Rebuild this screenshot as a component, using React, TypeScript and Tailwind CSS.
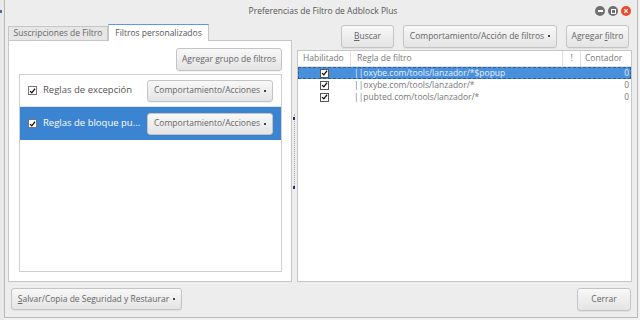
const rows = [
  { rule: '||oxybe.com/tools/lanzador/*$popup', selected: true },
  { rule: '||oxybe.com/tools/lanzador/*', selected: false },
  { rule: '||pubted.com/tools/lanzador/*', selected: false },
]

function Check({ dark = false }: { dark?: boolean }) {
  return (
    <span
      className={`inline-flex shrink-0 items-center justify-center w-[9px] h-[9px] border ${dark ? 'border-[#555]' : 'border-[#777]'} bg-white`}
    >
      <svg viewBox="0 0 10 10" className="w-[8px] h-[8px]">
        <path d="M1.5 5.2 L4 7.6 L8.6 1.8" fill="none" stroke="#111" strokeWidth="1.8" />
      </svg>
    </span>
  )
}

function Btn({ children, className = '' }: { children: React.ReactNode; className?: string }) {
  return (
    <div
      className={`flex items-center justify-center whitespace-nowrap rounded-[3px] border border-[#c4c4c4] bg-linear-to-b from-[#f8f8f8] to-[#e4e4e4] text-[#666] shadow-[0_1px_0_rgba(0,0,0,0.05)] ${className}`}
    >
      {children}
    </div>
  )
}

function Caret() {
  return <span className="ml-[4px] inline-block w-[2px] h-[2px] bg-[#444]" />
}

export default function App() {
  return (
    <div className="w-[640px] h-[320px] flex bg-[#f2f2f2] font-['Open_Sans',sans-serif] text-[#666] overflow-hidden">
      <div className="w-[4px] h-full bg-[#e9e9e9] relative">
        <span className="absolute left-0 top-[10px] w-[2px] h-[3px] bg-[#3a6fb0]" />
      </div>
      <div className="w-[634px] h-[318px] border-l border-r border-b border-[#b9b9b9] bg-[#ededed] flex flex-col">
        {/* title bar */}
        <div className="h-[23px] flex items-center relative">
          <div className="flex-1 text-center text-[8.5px] text-[#555] pl-[4px]">Preferencias de Filtro de Adblock Plus</div>
          <div className="absolute right-[6px] top-[6px] flex gap-[3px]">
            <span className="w-[10px] h-[10px] rounded-full bg-[#6f6f6f] flex items-center justify-center">
              <span className="w-[5px] h-[1.5px] bg-white" />
            </span>
            <span className="w-[10px] h-[10px] rounded-full bg-[#6f6f6f] flex items-center justify-center">
              <span className="w-[5px] h-[5px] border border-white" />
            </span>
            <span className="w-[10px] h-[10px] rounded-full bg-[#ec4a2c] flex items-center justify-center">
              <svg viewBox="0 0 10 10" className="w-[6px] h-[6px]">
                <path d="M2 2 L8 8 M8 2 L2 8" stroke="white" strokeWidth="1.8" />
              </svg>
            </span>
          </div>
        </div>

        <div className="flex h-[259px]">
          {/* left notebook */}
          <div className="ml-[3px] w-[284px] flex flex-col">
            <div className="h-[17px] flex items-end">
              <div className="h-[14px] w-[100px] border border-b-0 border-[#c6c6c6] bg-[#e6e6e6] text-[8.5px] flex items-center justify-center text-[#666]">
                Suscripciones de Filtro
              </div>
              <div className="h-[17px] w-[101px] border border-b-0 border-[#c6c6c6] border-t-[#5b9ae0] bg-white text-[8.5px] flex items-center justify-center text-[#555] -mb-px relative z-10">
                Filtros personalizados
              </div>
            </div>
            <div className="flex-1 bg-white border border-[#c6c6c6] flex flex-col pl-[10px] pr-[9px] pt-[7px] pb-[9px]">
              <div className="flex justify-end">
                <Btn className="w-[106px] h-[23px] text-[8.5px]">Agregar grupo de filtros</Btn>
              </div>
              <div className="mt-[3px] flex-1 border border-[#cfcfcf] flex flex-col">
                <div className="h-[32px] flex items-center pl-[8px] pr-[8px] border-b border-[#e2e2e2]">
                  <Check />
                  <span className="ml-[6px] text-[9.5px] whitespace-nowrap text-[#555] flex-1">Reglas de excepción</span>
                  <Btn className="w-[126px] h-[22px] text-[8.5px]">
                    Comportamiento/Acciones
                    <Caret />
                  </Btn>
                </div>
                <div className="h-[33px] flex items-center pl-[8px] pr-[8px] bg-[#3b84d2]">
                  <Check />
                  <span className="ml-[6px] text-[9.5px] whitespace-nowrap text-white flex-1">Reglas de bloque pu...</span>
                  <Btn className="w-[126px] h-[22px] text-[8.5px]">
                    Comportamiento/Acciones
                    <Caret />
                  </Btn>
                </div>
              </div>
            </div>
          </div>

          {/* splitter */}
          <div className="w-[5px] flex flex-col items-center relative">
            <span className="absolute left-[1px] top-[94px] w-[2px] h-[3px] bg-[#1e2f6a]" />
            <div className="mt-[91px] w-[2px] h-[72px] border-l border-dotted border-[#aaa]" />
            <span className="absolute left-[1px] top-[163px] w-[2px] h-[3px] bg-[#1e2f6a]" />
          </div>

          {/* right side */}
          <div className="w-[335px] flex flex-col">
            <div className="h-[25px] flex items-center justify-end gap-[9px] pt-[1px] pr-[3px]">
              <Btn className="w-[53px] h-[23px] text-[8.5px]"><span className="underline">B</span>uscar</Btn>
              <Btn className="w-[154px] h-[23px] text-[8.5px]">
                Comportamiento/Acción de filtros
                <Caret />
              </Btn>
              <Btn className="w-[63px] h-[23px] text-[8.5px]">Agregar <span className="underline ml-[2px]">f</span>iltro</Btn>
            </div>
            <div className="mt-[2px] flex-1 bg-white border border-[#c6c6c6] flex flex-col text-[8.5px]">
              <div className="h-[16px] flex items-center text-[#777] border-b border-[#e4e4e4]">
                <div className="w-[53px] pl-[5px] border-r border-[#e0e0e0] h-full flex items-center">Habilitado</div>
                <div className="flex-1 pl-[6px] border-r border-[#e0e0e0] h-full flex items-center">Regla de filtro</div>
                <div className="w-[18px] text-center border-r border-[#e0e0e0] h-full flex items-center justify-center">!</div>
                <div className="w-[50px] pl-[4px] h-full flex items-center">Contador</div>
              </div>
              {rows.map((r) => (
                <div
                  key={r.rule}
                  className={`h-[12px] flex items-center ${r.selected ? 'bg-[#4a8fdc] text-[#e8f1fb] outline outline-1 outline-dashed outline-[#2b5f9e] -outline-offset-1' : 'text-[#777]'}`}
                >
                  <div className="w-[53px] flex justify-center">
                    <Check dark />
                  </div>
                  <div className="flex-1 pl-[3px]">{r.rule}</div>
                  <div className="w-[30px] text-right pr-[2px]">0</div>
                </div>
              ))}
            </div>
          </div>
        </div>

        {/* bottom buttons */}
        <div className="flex-1 flex items-start justify-between pl-[6px] pr-[6px] pt-[6px]">
          <Btn className="w-[171px] h-[22px] text-[8.5px]">
            <span className="underline">S</span>alvar/Copia de Seguridad y Restaurar
            <Caret />
          </Btn>
          <Btn className="w-[54px] h-[23px] text-[8.5px]">Cerrar</Btn>
        </div>
      </div>
    </div>
  )
}
